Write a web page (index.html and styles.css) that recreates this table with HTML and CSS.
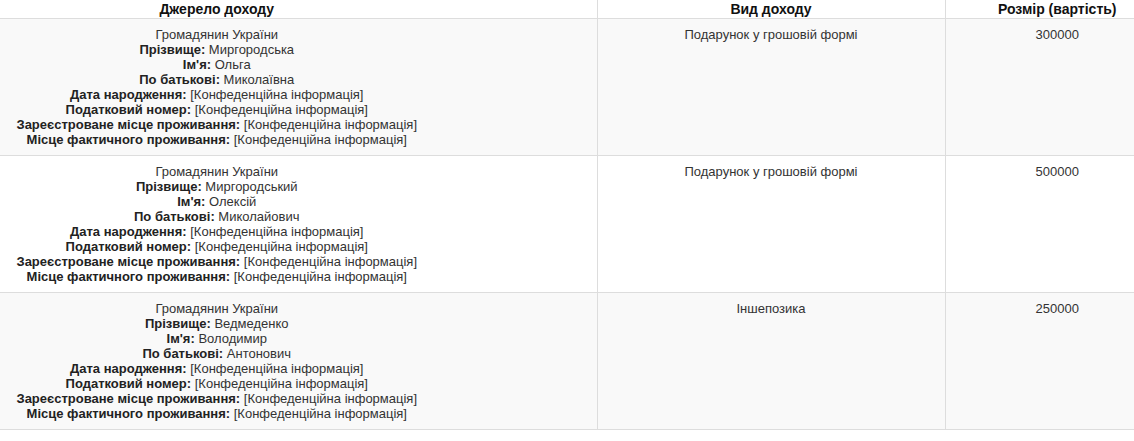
FILE: index.html
```html
<!DOCTYPE html>
<html lang="uk">
<head>
<meta charset="utf-8">
<link rel="stylesheet" href="styles.css">
</head>
<body>
<div class="viewport">
<table class="income">
  <colgroup>
    <col class="c1"><col class="c2"><col class="c3">
  </colgroup>
  <thead>
    <tr><th>Джерело доходу</th><th>Вид доходу</th><th>Розмір (вартість)</th></tr>
  </thead>
  <tbody>
    <tr class="odd">
      <td>Громадянин України<br><b>Прізвище:</b> Миргородська<br><b>Ім'я:</b> Ольга<br><b>По батькові:</b> Миколаївна<br><b>Дата народження:</b> [Конфеденційна інформація]<br><b>Податковий номер:</b> [Конфеденційна інформація]<br><b>Зареєстроване місце проживання:</b> [Конфеденційна інформація]<br><b>Місце фактичного проживання:</b> [Конфеденційна інформація]</td>
      <td>Подарунок у грошовій формі</td>
      <td>300000</td>
    </tr>
    <tr>
      <td>Громадянин України<br><b>Прізвище:</b> Миргородський<br><b>Ім'я:</b> Олексій<br><b>По батькові:</b> Миколайович<br><b>Дата народження:</b> [Конфеденційна інформація]<br><b>Податковий номер:</b> [Конфеденційна інформація]<br><b>Зареєстроване місце проживання:</b> [Конфеденційна інформація]<br><b>Місце фактичного проживання:</b> [Конфеденційна інформація]</td>
      <td>Подарунок у грошовій формі</td>
      <td>500000</td>
    </tr>
    <tr class="odd">
      <td>Громадянин України<br><b>Прізвище:</b> Ведмеденко<br><b>Ім'я:</b> Володимир<br><b>По батькові:</b> Антонович<br><b>Дата народження:</b> [Конфеденційна інформація]<br><b>Податковий номер:</b> [Конфеденційна інформація]<br><b>Зареєстроване місце проживання:</b> [Конфеденційна інформація]<br><b>Місце фактичного проживання:</b> [Конфеденційна інформація]</td>
      <td>Іншепозика</td>
      <td>250000</td>
    </tr>
  </tbody>
</table>
</div>
</body>
</html>
```
FILE: styles.css
```css
html, body {
  margin: 0;
  padding: 0;
  background: #fff;
}
body {
  font-family: "Liberation Sans", Arial, sans-serif;
  font-size: 13px;
  color: #333;
}
.viewport {
  overflow: hidden;
  width: 100%;
}
.income {
  width: 1332px;
  margin-left: -163px;
  border-collapse: collapse;
  table-layout: fixed;
}
.c1 { width: 760px; }
.c2 { width: 348px; }
.c3 { width: 224px; }
.income th {
  font-size: 14px;
  font-weight: bold;
  color: #111;
  line-height: 16px;
  padding: 1px 8px 1px;
  text-align: center;
  border-bottom: 1px solid #ddd;
  border-left: 1px solid #ddd;
}
.income td {
  text-align: center;
  vertical-align: top;
  line-height: 15px;
  padding: 8px 8px 8px;
  border-bottom: 1px solid #ddd;
  border-left: 1px solid #ddd;
}
.income th:first-child,
.income td:first-child {
  border-left: none;
}
.income tr.odd td {
  background: #f9f9f9;
}
.income b {
  color: #222;
}
```
